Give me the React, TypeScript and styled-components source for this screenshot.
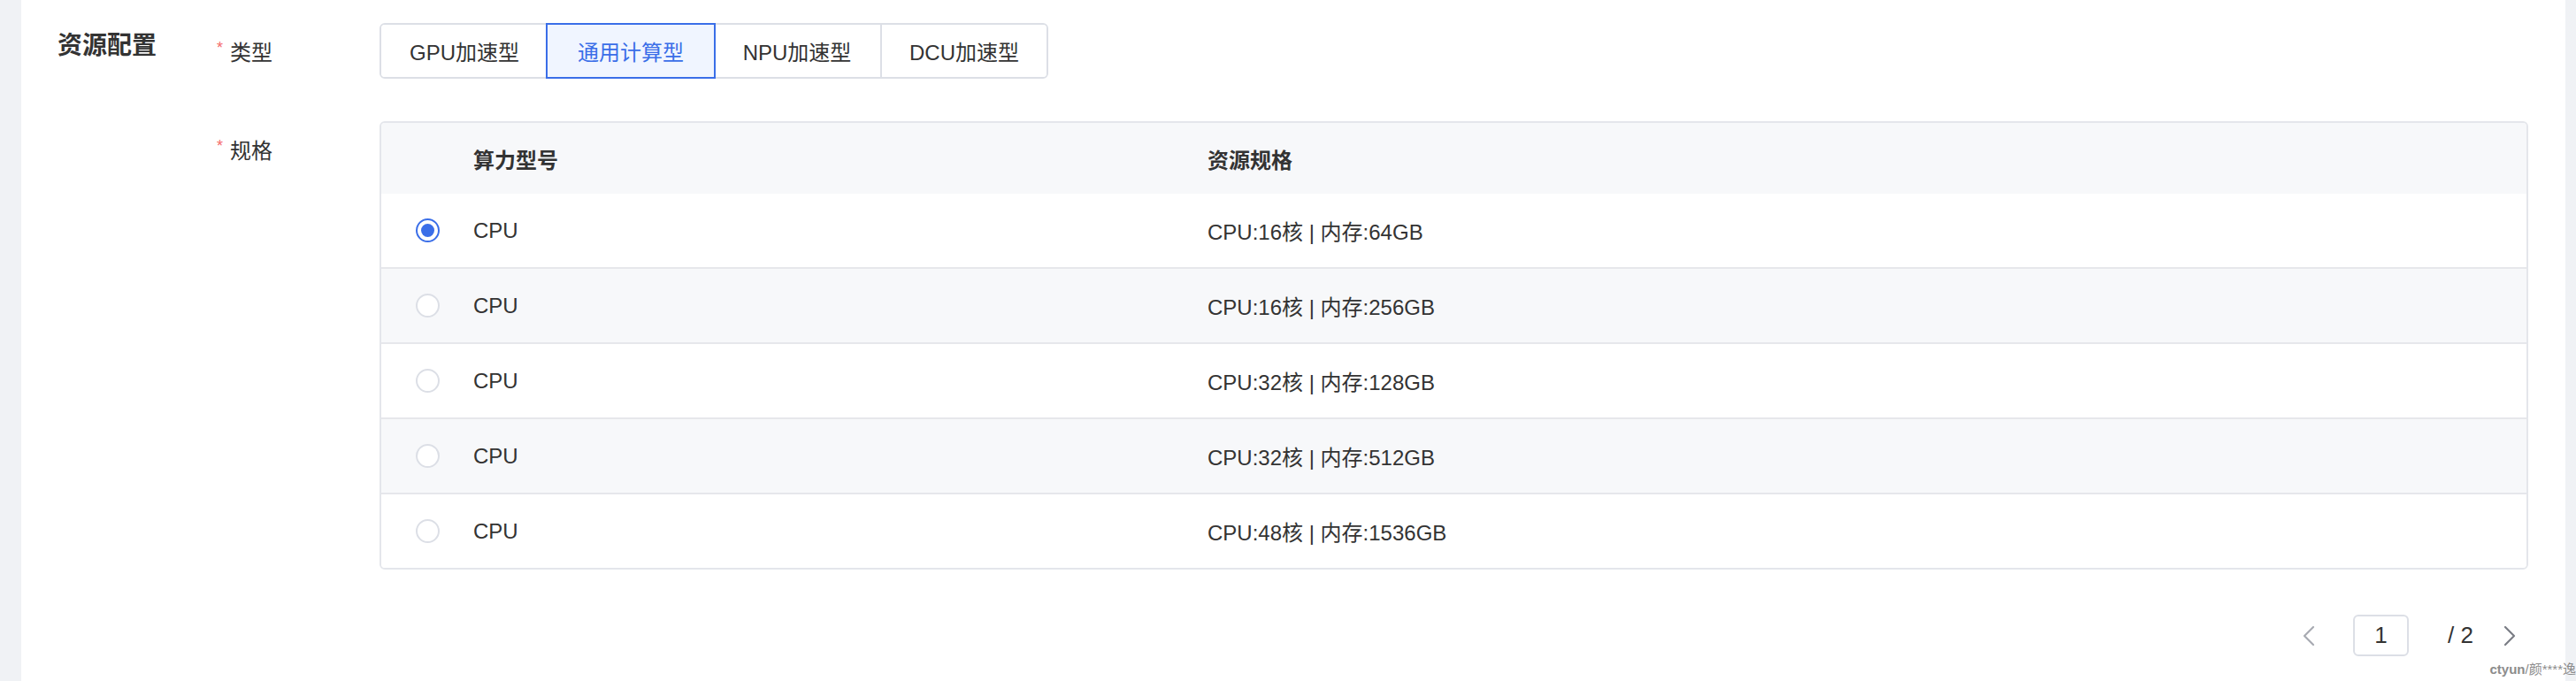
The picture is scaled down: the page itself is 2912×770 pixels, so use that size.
import React from "react";
import styled, { createGlobalStyle } from "styled-components";

const GlobalStyle = createGlobalStyle`
  html, body {
    margin: 0;
    padding: 0;
    background: #f0f2f5;
    font-family: "Liberation Sans", "Noto Sans CJK SC", Arial, sans-serif;
    color: #333333;
  }
  * { box-sizing: border-box; }
`;

const Page = styled.div`
  position: relative;
  display: flex;
  min-height: 770px;
  height: 770px;
  padding: 0 12px 0 24px;
  overflow: hidden;
`;

const Card = styled.div`
  flex: 1;
  background: #ffffff;
  display: grid;
  grid-template-columns: 180px 1fr;
  align-items: start;
  padding: 26px 42px 0 41px;
`;

const SectionTitle = styled.h2`
  margin: 0;
  font-size: 28px;
  line-height: 52px;
  font-weight: 600;
  color: #333333;
`;

const Form = styled.div`
  display: flex;
  flex-direction: column;
`;

const FormItem = styled.div<{ $gap?: number }>`
  display: grid;
  grid-template-columns: 184px 1fr;
  align-items: start;
  margin-bottom: ${(p) => p.$gap ?? 0}px;
`;

const Label = styled.div`
  display: flex;
  align-items: center;
  height: 63px;
  font-size: 24px;
  color: #333333;
`;

const Required = styled.span`
  color: #f56c6c;
  font-size: 18px;
  margin-right: 8px;
  position: relative;
  top: -3px;
`;

const SegmentGroup = styled.div`
  display: inline-flex;
  border: 2px solid #dcdfe6;
  border-radius: 6px;
  height: 63px;
  align-self: start;
  justify-self: start;
`;

const Segment = styled.button<{ $active?: boolean }>`
  width: 188px;
  height: 59px;
  margin: 0;
  padding: 0;
  font-family: inherit;
  font-size: 24px;
  background: ${(p) => (p.$active ? "#f0f5ff" : "#ffffff")};
  color: ${(p) => (p.$active ? "#3a6ee8" : "#333333")};
  border: none;
  border-left: 2px solid #dcdfe6;
  outline: ${(p) => (p.$active ? "2px solid #3a6ee8" : "none")};
  outline-offset: 0;
  position: relative;
  z-index: ${(p) => (p.$active ? 1 : 0)};
  cursor: pointer;
  &:first-child {
    border-left: none;
    border-radius: 4px 0 0 4px;
  }
  &:last-child {
    border-radius: 0 4px 4px 0;
  }
`;

const SelectedSegment = styled(Segment)`
  border-left: none;
  box-shadow: 0 0 0 2px #3a6ee8;
  outline: none;
  margin-left: 0;
  & + button {
    border-left: none;
  }
`;

const TableBox = styled.div`
  border: 2px solid #e4e6eb;
  border-radius: 6px;
  overflow: hidden;
`;

const Row = styled.div<{ $head?: boolean; $striped?: boolean; $last?: boolean }>`
  display: grid;
  grid-template-columns: 104px 830px 1fr;
  align-items: center;
  height: ${(p) => (p.$head ? 80 : p.$last ? 83 : 85)}px;
  background: ${(p) => (p.$head || p.$striped ? "#f7f8fa" : "#ffffff")};
  border-bottom: ${(p) => (p.$head || p.$last ? "none" : "2px solid #e6e7eb")};
  font-size: 24px;
  font-weight: ${(p) => (p.$head ? 600 : 400)};
  color: #333333;
`;

const RadioCell = styled.div`
  display: flex;
  justify-content: center;
  align-items: center;
`;

const Radio = styled.span<{ $checked?: boolean }>`
  width: 27px;
  height: 27px;
  border-radius: 50%;
  border: 2px solid ${(p) => (p.$checked ? "#3a6ee8" : "#dcdfe6")};
  background: #ffffff;
  display: flex;
  align-items: center;
  justify-content: center;
  &::after {
    content: "";
    width: 15px;
    height: 15px;
    border-radius: 50%;
    background: ${(p) => (p.$checked ? "#3a6ee8" : "transparent")};
  }
`;

const Cell = styled.div``;

const Pagination = styled.div`
  display: flex;
  justify-content: flex-end;
  align-items: center;
  margin-top: 51px;
  padding-right: 1px;
`;

const PageArrow = styled.button<{ $disabled?: boolean }>`
  width: 40px;
  height: 47px;
  border: none;
  background: transparent;
  padding: 0;
  display: flex;
  align-items: center;
  justify-content: center;
  color: ${(p) => (p.$disabled ? "#a8abb2" : "#7a7d85")};
`;

const PageInput = styled.div`
  width: 63px;
  height: 47px;
  margin-left: 30px;
  border: 2px solid #dcdfe6;
  border-radius: 6px;
  display: flex;
  align-items: center;
  justify-content: center;
  font-size: 26px;
  color: #333333;
`;

const PageTotal = styled.span`
  margin-left: 44px;
  margin-right: 21px;
  font-size: 26px;
  color: #333333;
`;

const Watermark = styled.div`
  position: absolute;
  right: 0;
  bottom: 4px;
  font-size: 15px;
  line-height: 18px;
  color: #8c8c8c;
  white-space: nowrap;
  pointer-events: none;
`;

const WatermarkBrand = styled.span`
  font-weight: 700;
`;

const Chevron = ({ dir }: { dir: "left" | "right" }) => (
  <svg width="14" height="24" viewBox="0 0 14 24" fill="none">
    <polyline
      points={dir === "left" ? "12,2 2,12 12,22" : "2,2 12,12 2,22"}
      stroke="currentColor"
      strokeWidth="2.2"
      strokeLinecap="round"
      strokeLinejoin="round"
    />
  </svg>
);

const types = ["GPU加速型", "通用计算型", "NPU加速型", "DCU加速型"];
const activeType = 1;

const specs = [
  "CPU:16核 | 内存:64GB",
  "CPU:16核 | 内存:256GB",
  "CPU:32核 | 内存:128GB",
  "CPU:32核 | 内存:512GB",
  "CPU:48核 | 内存:1536GB",
];

export default function App() {
  return (
    <>
      <GlobalStyle />
      <Page>
        <Card>
          <SectionTitle>资源配置</SectionTitle>
          <Form>
            <FormItem $gap={48}>
              <Label>
                <Required>*</Required>类型
              </Label>
              <SegmentGroup>
                {types.map((t, i) =>
                  i === activeType ? (
                    <SelectedSegment key={t} $active>
                      {t}
                    </SelectedSegment>
                  ) : (
                    <Segment key={t}>{t}</Segment>
                  )
                )}
              </SegmentGroup>
            </FormItem>
            <FormItem>
              <Label>
                <Required>*</Required>规格
              </Label>
              <div>
                <TableBox>
                  <Row $head>
                    <Cell />
                    <Cell>算力型号</Cell>
                    <Cell>资源规格</Cell>
                  </Row>
                  {specs.map((s, i) => (
                    <Row key={s} $striped={i % 2 === 1} $last={i === specs.length - 1}>
                      <RadioCell>
                        <Radio $checked={i === 0} />
                      </RadioCell>
                      <Cell>CPU</Cell>
                      <Cell>{s}</Cell>
                    </Row>
                  ))}
                </TableBox>
                <Pagination>
                  <PageArrow $disabled>
                    <Chevron dir="left" />
                  </PageArrow>
                  <PageInput>1</PageInput>
                  <PageTotal>/ 2</PageTotal>
                  <PageArrow>
                    <Chevron dir="right" />
                  </PageArrow>
                </Pagination>
              </div>
            </FormItem>
          </Form>
        </Card>
        <Watermark>
          <WatermarkBrand>ctyun</WatermarkBrand>/颜****逸
        </Watermark>
      </Page>
    </>
  );
}
